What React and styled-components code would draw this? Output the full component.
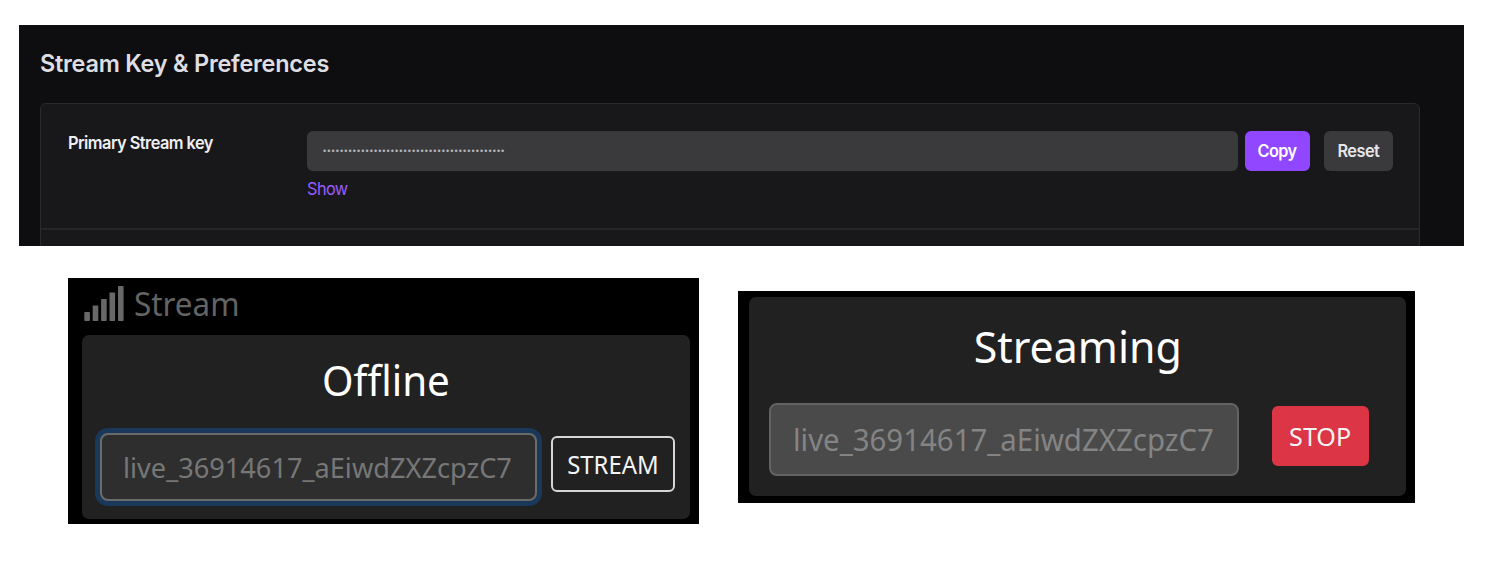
import React from "react";
import styled, { createGlobalStyle } from "styled-components";

const GlobalStyle = createGlobalStyle`
  *, *::before, *::after { box-sizing: border-box; }
  body { margin: 0; background: #fff; }
  button, input { font: inherit; letter-spacing: inherit; }
`;

const Page = styled.main`
  width: 1502px;
  height: 576px;
  overflow: hidden;
  padding: 25px 38px 0 19px;
`;

const Text = styled.span`
  display: inline-block;
  flex: none;
  white-space: nowrap;
  transform: scaleX(${(p) => p.$stretch || 1});
  transform-origin: ${(p) => p.$origin || "left"} center;
`;

const KeySettings = styled.section`
  display: flex;
  flex-direction: column;
  height: 221px;
  padding: 0 44px 0 21px;
  overflow: hidden;
  background: #0e0e10;
  font-family: Inter, "Liberation Sans", sans-serif;
`;

const SectionTitle = styled.h1`
  margin: 0;
  padding: 23px 0 0 0;
  height: 78px;
  flex: none;
  color: #dedee3;
  font-size: 24px;
  font-weight: 600;
  line-height: 31px;
  letter-spacing: -0.25px;
`;

const SettingsCard = styled.div`
  height: 160px;
  flex: none;
  border: 1px solid #2a2a2d;
  border-radius: 6px;
  background: #18181b;
`;

const SettingRow = styled.div`
  display: flex;
  height: 126px;
  padding: 27px 0 0 27px;
  border-bottom: 2px solid #252528;
  font-size: 17.5px;
  letter-spacing: -0.6px;
`;

const SettingLabel = styled.label`
  width: 239px;
  flex: none;
  color: #efeff1;
  font-weight: 600;
  line-height: 23px;
`;

const KeyColumn = styled.div`
  display: flex;
  flex-direction: column;
  align-items: flex-start;
  width: 931px;
  margin-right: 7px;
  flex: none;
`;

const MaskedKey = styled.div`
  width: 100%;
  height: 40px;
  padding-left: 16px;
  border-radius: 6px;
  background: #3a3a3c;
  color: #b4b4b8;
  font: 9px/41px "Liberation Sans", sans-serif;
  letter-spacing: 1.09px;
  white-space: nowrap;
`;

const ShowLink = styled.a`
  margin-top: 6px;
  color: #9a5cff;
  line-height: 24px;
`;

const ActionButton = styled.button`
  display: flex;
  align-items: center;
  justify-content: center;
  width: ${(p) => p.$width}px;
  height: 40px;
  margin: 0 14px 0 0;
  padding: 0 0 1px;
  flex: none;
  border: 0;
  border-radius: 6px;
  background: ${(p) => (p.$primary ? "#9147ff" : "#3a3a3c")};
  color: ${(p) => (p.$primary ? "#fff" : "#e6e6ea")};
  font-weight: 600;
`;

const StreamPanels = styled.div`
  display: flex;
  align-items: flex-start;
  padding: 32px 0 0 49px;
  font-family: "Noto Sans", "Open Sans", sans-serif;
`;

const Panel = styled.section`
  width: ${(p) => p.$width}px;
  height: ${(p) => p.$height}px;
  margin: ${(p) => p.$margin || 0};
  padding: ${(p) => p.$padding};
  flex: none;
  background: #000;
`;

const PanelHeader = styled.header`
  display: flex;
  height: 57px;
  padding-left: 2px;
  color: #646464;
  font-size: 32px;
  line-height: 52px;
`;

const SignalIcon = styled.svg`
  width: 41px;
  height: 36px;
  margin: 7px 9px 0 0;
  fill: #686868;
`;

const StatusCard = styled.div`
  display: flex;
  flex-direction: column;
  height: ${(p) => p.$height}px;
  padding: ${(p) => p.$padding};
  border-radius: 7px;
  background: #212121;
`;

const Status = styled.h2`
  display: flex;
  justify-content: center;
  height: ${(p) => p.$height}px;
  margin: 0;
  flex: none;
  color: #fff;
  font-size: ${(p) => p.$size}px;
  font-weight: 400;
  line-height: ${(p) => p.$line}px;
`;

const Controls = styled.div`
  display: flex;
  align-items: flex-start;
`;

const KeyField = styled.div`
  width: ${(p) => p.$width}px;
  height: ${(p) => p.$height}px;
  padding-left: ${(p) => p.$inset}px;
  flex: none;
  border: 2px solid ${(p) => (p.$focused ? "#6b6b6b" : "#636363")};
  border-radius: 8px;
  background: ${(p) => (p.$focused ? "#2e2e2e" : "#4a4a4a")};
  box-shadow: ${(p) => (p.$focused ? "0 0 0 5px #1a3859" : "none")};
  color: ${(p) => (p.$focused ? "#777" : "#848484")};
  font-size: ${(p) => p.$size}px;
  line-height: ${(p) => p.$line}px;
`;

const StreamButton = styled.button`
  display: flex;
  justify-content: center;
  width: ${(p) => p.$width}px;
  height: ${(p) => p.$height}px;
  margin: ${(p) => p.$margin};
  padding: 0;
  flex: none;
  border: 2px solid ${(p) => (p.$danger ? "#dc3545" : "#d6d6d6")};
  border-radius: 6px;
  background: ${(p) => (p.$danger ? "#dc3545" : "transparent")};
  color: #f4f4f4;
  font-size: ${(p) => p.$size}px;
  line-height: ${(p) => p.$line}px;
`;

const STREAM_KEY = "live_36914617_aEiwdZXZcpzC7";

const bars = [
  { x: 0.3, height: 9 },
  { x: 8.7, height: 15.5 },
  { x: 17.1, height: 22 },
  { x: 25.5, height: 28.5 },
  { x: 34, height: 35 },
];

function Signal() {
  return (
    <SignalIcon viewBox="0 0 41 36" aria-hidden="true">
      {bars.map((bar) => (
        <rect key={bar.x} x={bar.x} y={36 - bar.height} width="5.6" height={bar.height} rx="0.8" />
      ))}
    </SignalIcon>
  );
}

export default function App() {
  return (
    <>
      <GlobalStyle />
      <Page>
        <KeySettings>
          <SectionTitle>
            <Text $stretch={0.978}>Stream Key &amp; Preferences</Text>
          </SectionTitle>
          <SettingsCard>
            <SettingRow>
              <SettingLabel>
                <Text $stretch={0.937}>Primary Stream key</Text>
              </SettingLabel>
              <KeyColumn>
                <MaskedKey>{"•".repeat(43)}</MaskedKey>
                <ShowLink>
                  <Text $stretch={0.93}>Show</Text>
                </ShowLink>
              </KeyColumn>
              <ActionButton $primary $width={65}>
                <Text $stretch={0.93} $origin="center">Copy</Text>
              </ActionButton>
              <ActionButton $width={69}>
                <Text $stretch={0.935} $origin="center">Reset</Text>
              </ActionButton>
            </SettingRow>
          </SettingsCard>
        </KeySettings>

        <StreamPanels>
          <Panel $width={631} $height={246} $padding="0 9px 0 14px">
            <PanelHeader>
              <Signal />
              <Text $stretch={0.98}>Stream</Text>
            </PanelHeader>
            <StatusCard $height={184} $padding="20px 18px 0">
              <Status $size={41} $height={78} $line={50}>
                <Text $stretch={0.985} $origin="center">Offline</Text>
              </Status>
              <Controls>
                <KeyField $focused $width={437} $height={68} $inset={21} $size={28} $line={65}>
                  <Text $stretch={0.97}>{STREAM_KEY}</Text>
                </KeyField>
                <StreamButton $width={124} $height={56} $margin="3px 0 0 14px" $size={25} $line={52}>
                  <Text $stretch={0.955} $origin="center">STREAM</Text>
                </StreamButton>
              </Controls>
            </StatusCard>
          </Panel>

          <Panel $width={677} $height={212} $margin="13px 0 0 39px" $padding="6px 9px 0 11px">
            <StatusCard $height={199} $padding="24px 20px 0">
              <Status $size={44} $height={82} $line={50}>
                <Text $stretch={0.975} $origin="center">Streaming</Text>
              </Status>
              <Controls>
                <KeyField $width={470} $height={73} $inset={22} $size={30} $line={70}>
                  <Text $stretch={0.98}>{STREAM_KEY}</Text>
                </KeyField>
                <StreamButton $danger $width={97} $height={60} $margin="3px 0 0 33px" $size={26} $line={56}>
                  <Text $stretch={0.966} $origin="center">STOP</Text>
                </StreamButton>
              </Controls>
            </StatusCard>
          </Panel>
        </StreamPanels>
      </Page>
    </>
  );
}
